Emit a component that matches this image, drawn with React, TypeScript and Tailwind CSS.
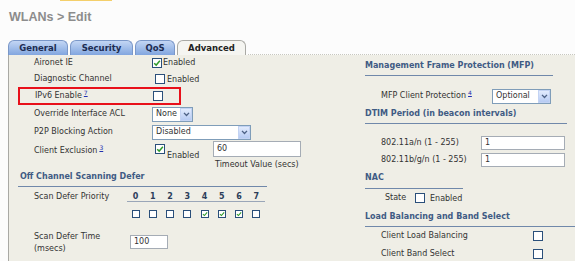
import React from "react";

function Box({ checked = false, small = false }: { checked?: boolean; small?: boolean }) {
  return (
    <span
      className={
        small
          ? "inline-flex items-center justify-center w-[8px] h-[8px] bg-white border border-[#2a4f7a] shrink-0"
          : "inline-flex items-center justify-center w-[10px] h-[10px] bg-white border border-[#2a4f7a] shrink-0"
      }
    >
      {checked && (
        <svg viewBox="0 0 10 10" className={small ? "w-[6px] h-[6px]" : "w-[8px] h-[8px]"}>
          <path d="M1.5 5.2 L4 7.6 L8.6 2.2" fill="none" stroke="#2f9a2a" strokeWidth="1.8" />
        </svg>
      )}
    </span>
  );
}

function Select({ value, width }: { value: string; width: string }) {
  return (
    <div className={`flex items-center h-[15px] bg-white border border-[#7f9db9] pl-[3px] ${width}`}>
      <span className="flex-1">{value}</span>
      <span className="w-[12px] h-[13px] mr-[0px] flex items-center justify-center bg-gradient-to-b from-[#e2ebfd] to-[#b7cbf3] border border-[#c3d3f3]">
        <svg viewBox="0 0 8 6" className="w-[7px] h-[5px]">
          <path d="M1 1 L4 4.2 L7 1" fill="none" stroke="#4d6185" strokeWidth="1.6" />
        </svg>
      </span>
    </div>
  );
}

function Input({ value, width, height }: { value: string; width: string; height: string }) {
  return (
    <div className={`bg-white border border-[#a5acb5] pl-[3px] flex items-center ${width} ${height}`}>{value}</div>
  );
}

function Sup({ n }: { n: string }) {
  return <sup className="text-[6px] text-[#2030b0] underline ml-[2px] top-[-3px]">{n}</sup>;
}

const tabs = [
  { name: "General", w: "w-[60px]" },
  { name: "Security", w: "w-[63px]" },
  { name: "QoS", w: "w-[40px]" },
];

export default function App() {
  return (
    <div className="w-[575px] h-[261px] overflow-hidden bg-[#fcfcfc] text-[#333] font-['DejaVu_Sans',Verdana,sans-serif] text-[8px] leading-[10px] flex flex-col">
      <div className="h-[1px] flex shrink-0">
        <span className="ml-[60px] w-[52px] bg-[#f4cf6a]" />
      </div>
      <div className="h-[38px] shrink-0 pl-[9px] pt-[9px] font-['Liberation_Sans',Arial,sans-serif] text-[12.5px] leading-[14px] font-bold text-[#8c8c8c]">
        WLANs &gt; Edit
      </div>

      {/* tabs */}
      <div className="h-[16px] shrink-0 flex items-end pl-[8px] gap-[2px] font-bold text-[8.5px] text-[#1d2c52]">
        {tabs.map((t) => (
          <div
            key={t.name}
            className={`h-[15px] ${t.w} rounded-t-[6px] border-t border-x border-[#7a97c8] bg-gradient-to-b from-[#c3d6f4] to-[#82a6df] flex items-center justify-center`}
          >
            {t.name}
          </div>
        ))}
        <div className="h-[15px] w-[69px] rounded-t-[6px] border-t border-x border-[#a9a9a4] bg-[#f5f5f1] flex items-center justify-center text-[#222]">
          Advanced
        </div>
        <div className="flex-1 self-end border-b border-dotted border-[#c8c8c0]" />
      </div>

      {/* panel */}
      <div className="flex-1 ml-[8px] flex border-l border-[#a9a9a4] bg-[#efeee6]">
        {/* left column */}
        <div className="w-[341px] flex flex-col">
          <div className="h-[15px] flex items-center pl-[25px]">
            <span className="w-[118px]">Aironet IE</span>
            <Box checked />
            <span className="ml-[1px]">Enabled</span>
          </div>
          <div className="h-[17px] flex items-center pl-[25px]">
            <span className="w-[118px]">Diagnostic Channel</span>
            <span className="ml-[3px] flex items-center">
              <Box />
            </span>
            <span className="ml-[2px] mt-[3px]">Enabled</span>
          </div>
          <div className="ml-[9px] w-[163px] h-[18px] border-2 border-[#e8101a] flex items-center pl-[15px]">
            <span className="w-[118px]">
              IPv6 Enable
              <Sup n="7" />
            </span>
            <Box />
          </div>
          <div className="h-[18px] flex items-center pl-[25px]">
            <span className="w-[118px]">Override Interface ACL</span>
            <Select value="None" width="w-[41px]" />
          </div>
          <div className="h-[18px] flex items-center pl-[25px]">
            <span className="w-[118px]">P2P Blocking Action</span>
            <Select value="Disabled" width="w-[99px]" />
          </div>
          <div className="h-[30px] flex items-start pl-[25px]">
            <span className="w-[118px] pt-[5px]">
              Client Exclusion
              <Sup n="3" />
            </span>
            <div className="w-[61px] flex items-start pl-[3px]">
              <span className="mt-[3px] flex">
                <Box checked />
              </span>
              <span className="ml-[2px] mt-[10px]">Enabled</span>
            </div>
            <div className="flex flex-col">
              <Input value="60" width="w-[88px]" height="h-[16px]" />
              <span className="mt-[3px] pl-[2px]">Timeout Value (secs)</span>
            </div>
          </div>

          <div className="ml-[9px] w-[249px] pt-[1px] pb-[4px] pl-[2px] border-b border-[#7088aa] font-bold text-[#3f5b84]">
            Off Channel Scanning Defer
          </div>
          <div className="flex pl-[25px]">
            <span className="w-[93px] pt-[5px]">Scan Defer Priority</span>
            <div className="flex flex-col">
              <div className="grid grid-cols-8 w-[138px] h-[15px] pt-[5px] border-b border-[#9aa6b8] font-bold text-[#2c3e5a] text-center">
                {["0", "1", "2", "3", "4", "5", "6", "7"].map((d) => (
                  <span key={d}>{d}</span>
                ))}
              </div>
              <div className="grid grid-cols-8 w-[138px] pt-[8px] justify-items-center">
                {[false, false, false, false, true, true, true, false].map((c, i) => (
                  <Box key={i} small checked={c} />
                ))}
              </div>
            </div>
          </div>
          <div className="flex pl-[25px] mt-[13px]">
            <span className="w-[96px] leading-[12px]">
              Scan Defer Time
              <br />
              (msecs)
            </span>
            <div className="mt-[4px]">
              <Input value="100" width="w-[38px]" height="h-[14px]" />
            </div>
          </div>
        </div>

        {/* right column */}
        <div className="flex-1 flex flex-col pl-[15px]">
          <div className="w-[188px] pt-[6px] pb-[4px] border-b border-[#7088aa] font-bold text-[#3f5b84]">
            Management Frame Protection (MFP)
          </div>
          <div className="mt-[12px] h-[16px] flex items-center pl-[16px]">
            <span className="w-[111px]">
              MFP Client Protection
              <Sup n="4" />
            </span>
            <Select value="Optional" width="w-[59px]" />
          </div>
          <div className="w-[202px] pt-[5px] pb-[4px] border-b border-[#7088aa] font-bold text-[#3f5b84]">
            DTIM Period (in beacon intervals)
          </div>
          <div className="mt-[12px] flex items-center pl-[16px]">
            <span className="w-[100px]">802.11a/n (1 - 255)</span>
            <Input value="1" width="w-[84px]" height="h-[14px]" />
          </div>
          <div className="mt-[3px] flex items-center pl-[16px]">
            <span className="w-[100px]">802.11b/g/n (1 - 255)</span>
            <Input value="1" width="w-[84px]" height="h-[14px]" />
          </div>
          <div className="w-[98px] pt-[6px] pb-[5px] border-b border-[#7088aa] font-bold text-[#3f5b84]">
            NAC
          </div>
          <div className="h-[18px] flex items-center pl-[20px]">
            <span className="w-[30px]">State</span>
            <Box />
            <span className="ml-[5px] mt-[2px]">Enabled</span>
          </div>
          <div className="pt-[5px] pb-[4px] border-b border-[#7088aa] font-bold text-[#3f5b84]">
            Load Balancing and Band Select
          </div>
          <div className="h-[18px] flex items-center pl-[16px]">
            <span className="w-[152px]">Client Load Balancing</span>
            <Box />
          </div>
          <div className="h-[18px] flex items-center pl-[16px]">
            <span className="w-[152px]">Client Band Select</span>
            <Box />
          </div>
        </div>
      </div>
    </div>
  );
}
